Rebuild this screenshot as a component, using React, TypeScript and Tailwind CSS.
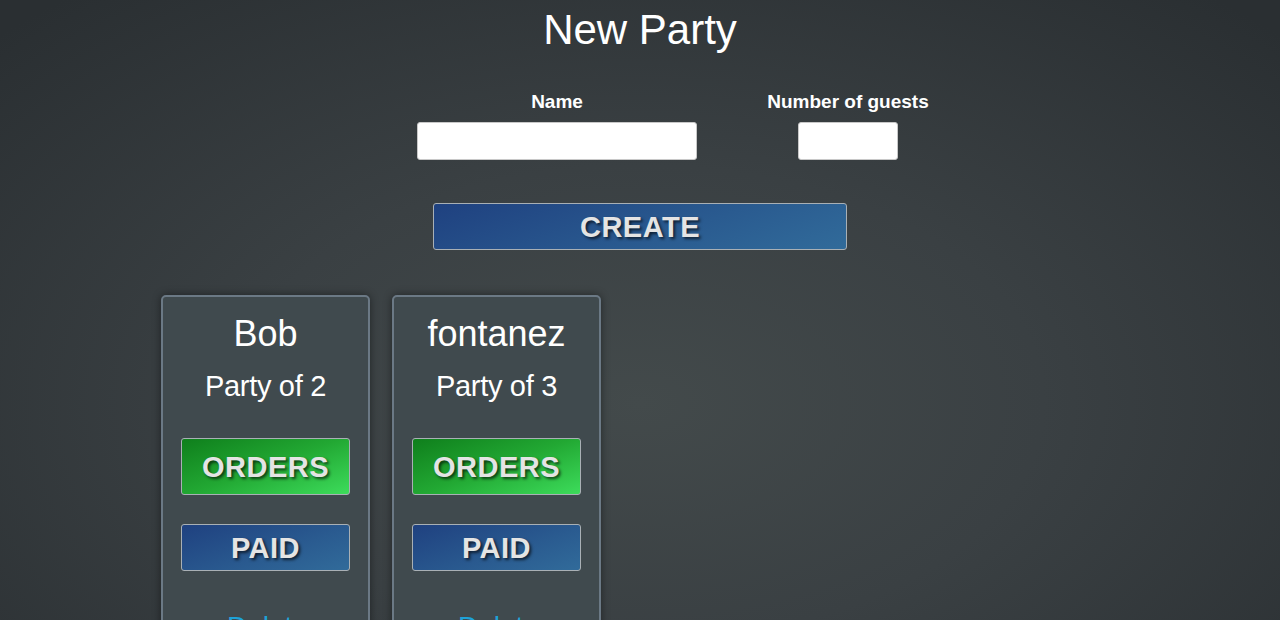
import React, { useState } from "react";

type Party = {
  id: number;
  name: string;
  guests: number;
};

const parties: Party[] = [
  { id: 1, name: "Bob", guests: 2 },
  { id: 2, name: "fontanez", guests: 3 },
];

// shared look for the embossed action buttons
const btnText =
  "pt-[3px] font-bold text-[29px] text-[#e4e4e4] tracking-[0.5px] [text-shadow:2px_2px_3px_rgba(0,0,0,0.65)]";
const blueBtn =
  "bg-[linear-gradient(160deg,#1f4180_0%,#2a5b90_60%,#316b9a_100%)] border border-[#a9b0b5] rounded-[3px]";
const greenBtn =
  "bg-[linear-gradient(160deg,#0f7f1c_0%,#22a833_50%,#3ddc5b_100%)] border border-[#a9b0b5] rounded-[3px]";

const PartyCard = ({ party }: { party: Party }) => {
  return (
    <div className="w-[209px] h-[360px] shrink-0 flex flex-col items-center px-[18px] pt-[17px] bg-[#404a4e] border-2 border-[#6b7985] rounded-[5px] shadow-[0_0_8px_rgba(0,0,0,0.45)]">
      <h2 className="text-[36px] leading-[40px] text-white">{party.name}</h2>
      <p className="mt-[15px] text-[29px] leading-[34px] text-white tracking-[-0.3px]">
        Party of {party.guests}
      </p>
      <button
        className={`mt-[35px] w-full h-[57px] flex items-center justify-center ${greenBtn}`}
      >
        <span className={btnText}>ORDERS</span>
      </button>
      <button
        className={`mt-[29px] w-full h-[47px] flex items-center justify-center ${blueBtn}`}
      >
        <span className={btnText}>PAID</span>
      </button>
      <a className="mt-[40px] pl-[4px] text-[28px] leading-[32px] text-[#1ea2d8]">Delete</a>
    </div>
  );
};

export default function App() {
  const [name, setName] = useState<string>("");
  const [guests, setGuests] = useState<string>("");

  return (
    <div
      className="w-full h-[620px] overflow-hidden bg-[radial-gradient(ellipse_70%_85%_at_50%_65%,#434a4b_0%,#3a4043_45%,#2a2f32_100%)]"
      style={{ fontFamily: '"Liberation Sans", Arial, Helvetica, sans-serif' }}
    >
      <h1 className="pt-[6px] text-center text-[42px] leading-[48px] text-white">
        New Party
      </h1>

      {/* form */}
      <div className="mt-[37px] flex justify-center gap-[71px] pl-[65px]">
        <label className="w-[280px] flex flex-col items-center">
          <span className="text-[19px] leading-[22px] font-bold text-white">Name</span>
          <input
            value={name}
            onChange={(e) => setName(e.target.value)}
            className="mt-[9px] w-[280px] h-[38px] bg-white rounded-[3px] border border-[#c8c8c8] px-2 outline-none"
          />
        </label>
        <label className="w-[160px] flex flex-col items-center">
          <span className="text-[19px] leading-[22px] font-bold text-white whitespace-nowrap">
            Number of guests
          </span>
          <input
            value={guests}
            onChange={(e) => setGuests(e.target.value)}
            className="mt-[9px] w-[100px] h-[38px] bg-white rounded-[3px] border border-[#c8c8c8] px-2 outline-none"
          />
        </label>
      </div>

      <div className="mt-[43px] flex justify-center">
        <button
          className={`w-[414px] h-[47px] flex items-center justify-center ${blueBtn}`}
        >
          <span className={btnText}>CREATE</span>
        </button>
      </div>

      {/* parties */}
      <div className="mt-[45px] w-[958px] mx-auto flex gap-[22px]">
        {parties.map((p) => (
          <PartyCard key={p.id} party={p} />
        ))}
      </div>
    </div>
  );
}
